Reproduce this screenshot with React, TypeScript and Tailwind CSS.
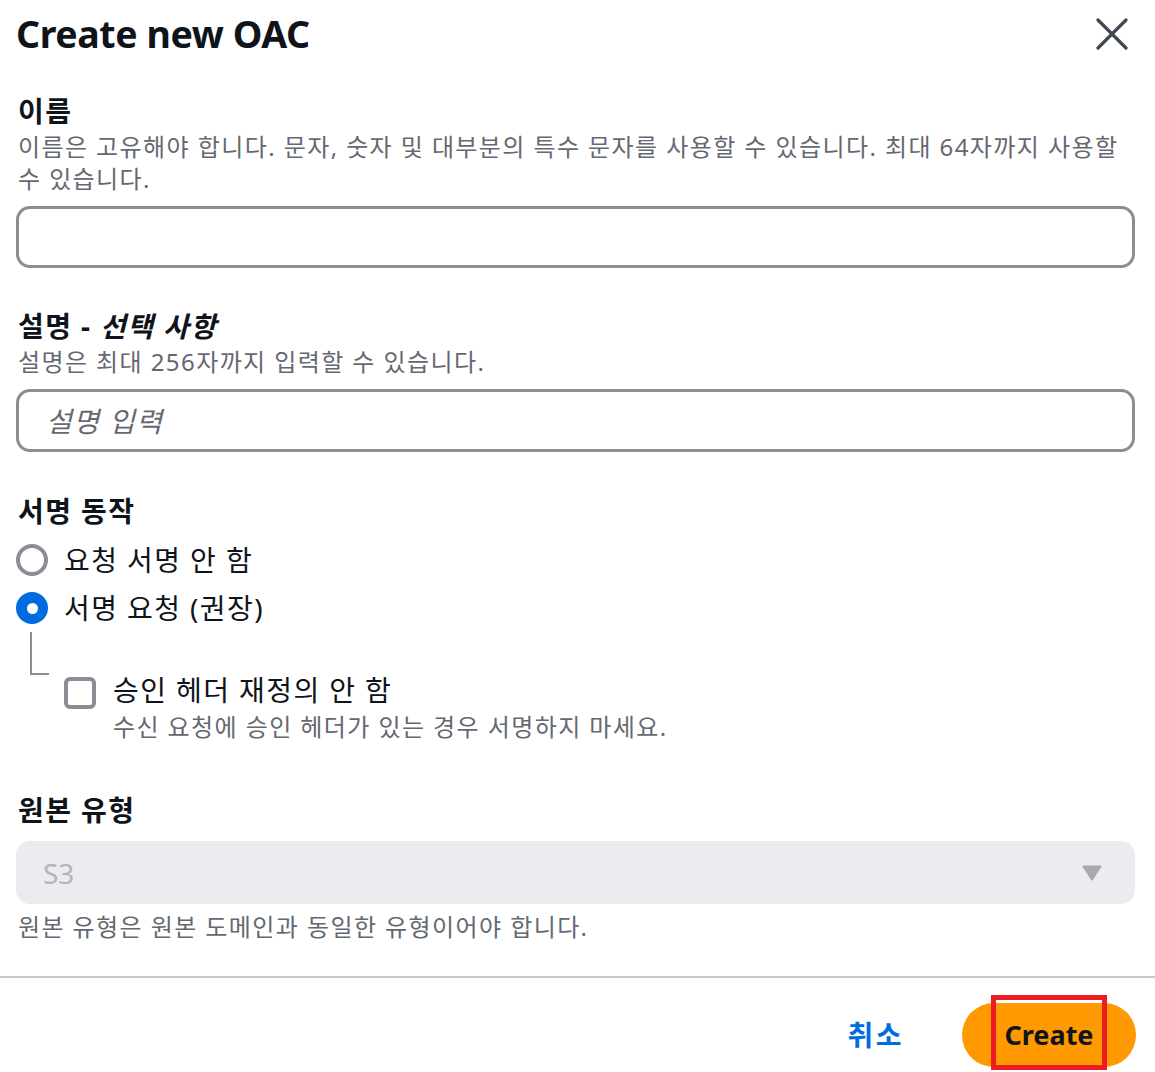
import React from 'react';

const font = { fontFamily: '"Noto Sans", "Noto Sans CJK KR", sans-serif' };

const CloseIcon = () => (
  <svg width="32" height="32" viewBox="0 0 32 32" fill="none" className="shrink-0 mt-[8px]">
    <path d="M2 2 L30 30 M30 2 L2 30" stroke="#414750" strokeWidth="3.2" strokeLinecap="round" />
  </svg>
);

const Caret = () => (
  <svg width="20" height="16" viewBox="0 0 20 16" className="shrink-0">
    <path d="M1.5 1.5 H18.5 L10 14.5 Z" fill="#a8a8ae" stroke="#a8a8ae" strokeWidth="2" strokeLinejoin="round" />
  </svg>
);

export default function App() {
  return (
    <div className="w-[1155px] h-[1072px] bg-white overflow-hidden text-[#0f141a]" style={font}>
      {/* Header */}
      <div className="flex justify-between items-start pl-[16px] pr-[27px] pt-[10px]">
        <h2 className="text-[37.5px] leading-[48px] font-bold tracking-[-0.4px]">Create new OAC</h2>
        <CloseIcon />
      </div>

      <div className="pl-[16px] pr-[20px] tracking-[0.088em]">
        {/* 이름 */}
        <div className="mt-[35px] px-[2px] text-[28px] leading-[36px] font-bold">이름</div>
        <div className="mt-[2px] px-[2px] text-[24px] leading-[32px] text-[#656871]">
          이름은 고유해야 합니다. 문자, 숫자 및 대부분의 특수 문자를 사용할 수 있습니다. 최대 64자까지 사용할 수 있습니다.
        </div>
        <div className="mt-[11px] h-[62px] rounded-[14px] border-[3px] border-[#8c8c94]" />

        {/* 설명 */}
        <div className="mt-[40px] px-[2px] text-[28px] leading-[36px] font-bold">
          설명 - <span className="italic">선택 사항</span>
        </div>
        <div className="mt-[2px] px-[2px] text-[24px] leading-[32px] text-[#656871]">
          설명은 최대 256자까지 입력할 수 있습니다.
        </div>
        <div className="mt-[11px] h-[63px] rounded-[14px] border-[3px] border-[#8c8c94] flex items-center pl-[27px]">
          <span className="text-[28px] italic text-[#656871]">설명 입력</span>
        </div>

        {/* 서명 동작 */}
        <div className="mt-[41px] px-[2px] text-[28px] leading-[36px] font-bold">서명 동작</div>
        <div className="mt-[7px] flex flex-col">
          <div className="h-[48px] flex items-center gap-[16px]">
            <span className="w-[32px] h-[32px] rounded-full border-[4px] border-[#8c8c94] shrink-0" />
            <span className="text-[28px] leading-[36px]">요청 서명 안 함</span>
          </div>
          <div className="h-[48px] flex items-center gap-[16px]">
            <span className="w-[32px] h-[32px] rounded-full bg-[#006ce0] shrink-0 flex items-center justify-center">
              <span className="w-[11px] h-[11px] rounded-full bg-white" />
            </span>
            <span className="text-[28px] leading-[36px]">서명 요청 (권장)</span>
          </div>
        </div>
        <div className="flex items-start">
          <div className="ml-[14px] w-[19px] h-[43px] border-l-2 border-b-2 border-[#8c8c94] shrink-0" />
          <div className="ml-[15px] mt-[40px] flex items-start gap-[17px]">
            <span className="mt-[5px] w-[32px] h-[32px] rounded-[6px] border-[4px] border-[#8c8c94] shrink-0" />
            <div>
              <div className="text-[28px] leading-[36px]">승인 헤더 재정의 안 함</div>
              <div className="mt-[3px] text-[24px] leading-[32px] text-[#656871]">
                수신 요청에 승인 헤더가 있는 경우 서명하지 마세요.
              </div>
            </div>
          </div>
        </div>

        {/* 원본 유형 */}
        <div className="mt-[49px] px-[2px] text-[28px] leading-[36px] font-bold">원본 유형</div>
        <div className="mt-[13px] h-[63px] rounded-[14px] bg-[#ebebf0] flex items-center justify-between pl-[27px] pr-[33px]">
          <span className="text-[28px] tracking-normal text-[#b4b4bb]">S3</span>
          <Caret />
        </div>
        <div className="mt-[7px] px-[2px] text-[24px] leading-[32px] text-[#656871]">
          원본 유형은 원본 도메인과 동일한 유형이어야 합니다.
        </div>
      </div>

      {/* Footer */}
      <div className="mt-[33px] border-t-2 border-[#c6c6cd] flex justify-end items-center pt-[25px] pr-[19px]">
        <button className="mr-[58px] text-[28px] leading-[36px] font-bold tracking-[0.088em] text-[#006ce0]">취소</button>
        <div className="relative">
          <button className="h-[64px] w-[174px] rounded-full bg-[#ff9900] text-[27px] font-bold text-[#0f141a] flex items-center justify-center">
            Create
          </button>
          <div className="absolute left-[29px] top-[-8px] w-[116px] h-[75px] border-[5px] border-[#ed1c24]" />
        </div>
      </div>
    </div>
  );
}
